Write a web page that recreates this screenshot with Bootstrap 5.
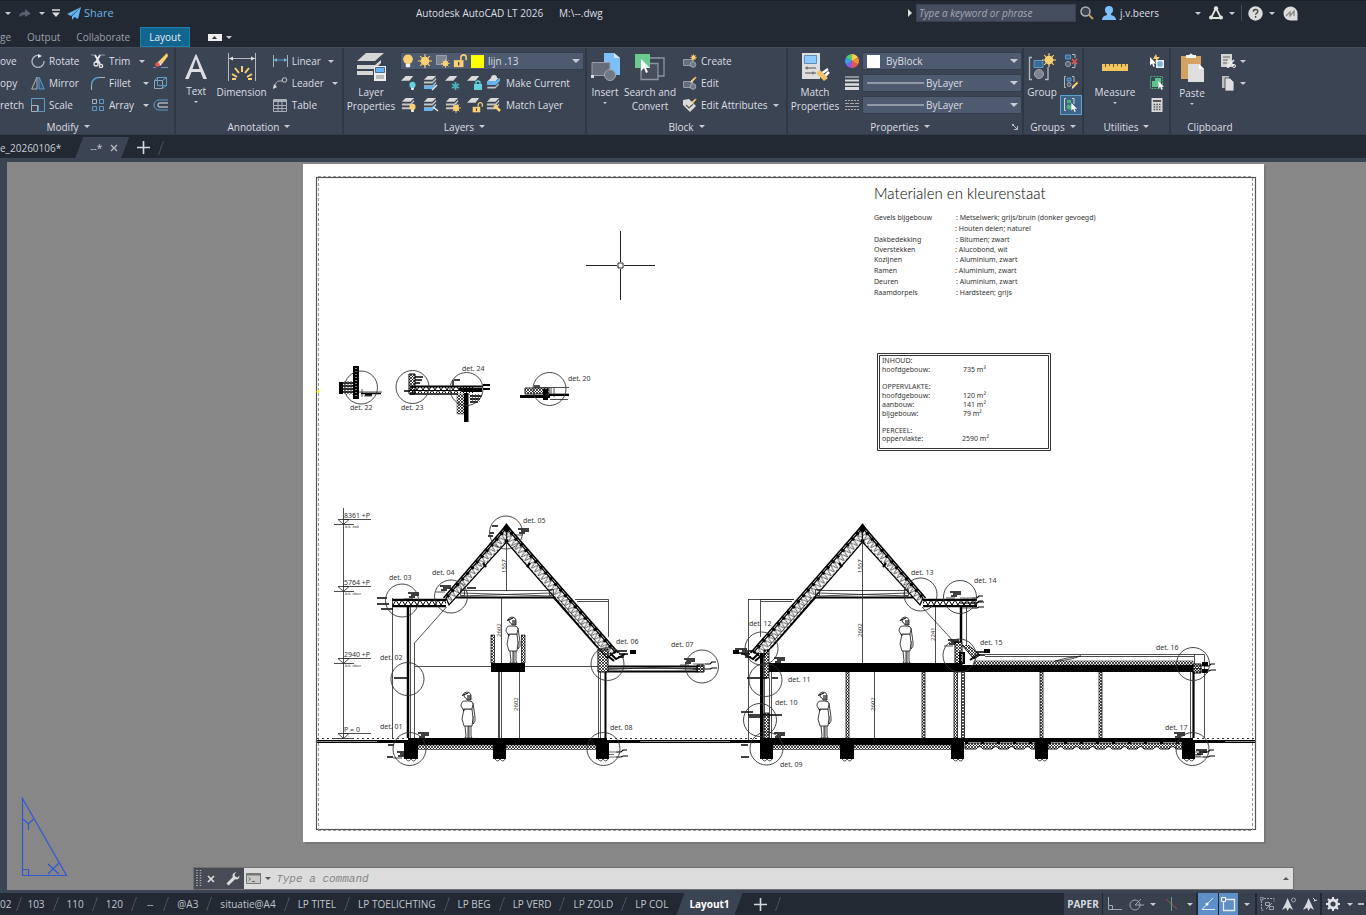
<!DOCTYPE html>
<html lang="en">
<head>
<meta charset="utf-8">
<meta name="viewport" content="width=device-width, initial-scale=1">
<title>Autodesk AutoCAD LT 2026</title>
<link href="https://cdn.jsdelivr.net/npm/bootstrap@5.3.0/dist/css/bootstrap.min.css" rel="stylesheet">
<style>
:root{--ink:#222933;--panel:#3b4453;--field:#4d5a6f;--txt:#dcdfe4}
body{font:10px/14px "Open Sans","Noto Sans",sans-serif;background:var(--ink);color:var(--txt)}
button,input,select{font:inherit;color:inherit}
svg{flex:none;display:block}
.tb{background:none;border:0;padding:0;display:flex;align-items:center;white-space:nowrap;color:var(--txt);text-align:left}
.crt{flex:none;width:0;height:0;border:solid transparent;border-width:3px 3px 0;border-top-color:#c9cdd3}
.crt-lg{border-width:4px 4px 0}
.gap-s{gap:6px}
/* title bar */
.titlebar{height:27px;border-top:1px solid #1b1f28;padding-bottom:2px}
.quick{flex:0 0 416px;gap:7px;padding-left:5px}
.quick .share{color:#6bb3e6;font-size:11px;gap:3px}
.searchbox{width:160px;height:18px;background:#454e5f;border:1px solid #39414f;padding:0 2px;font-style:italic}
.searchbox::placeholder,.cmd input::placeholder{color:#a3a8b1;opacity:1}
.titleright{padding-right:68px}
.user-crt{margin:0 8px 0 36px}
.vr-line{width:1px;height:16px;background:#444d5b;margin:0 6px}
/* ribbon tabs */
.rtabs{height:20px;gap:16px}
.rtabs a{color:#9aa0a9;text-decoration:none;line-height:18px}
.rtabs a.on{background:#11658f;border:1px solid #1c80b3;color:#e8eef4;padding:0 8px;margin:0 2px 0 -6px}
.minimise{width:14px;height:7px;background:#eee;color:#333;justify-content:center}
/* ribbon */
.ribbon{height:88px;background:var(--panel);border-top:1px solid #434c5b;border-bottom:1px solid #333c49}
.panel{flex:none;border-right:2px solid #303846;padding-top:2px}
.panel-body{height:66px}
.panel-name{height:18px;justify-content:center;gap:5px;padding-top:3px}
.rowx{height:22px;display:flex;align-items:center}
.rowx .tb{gap:4px;height:22px}
.sq{width:22px;justify-content:center}
.big{flex-direction:column;text-align:center;padding-top:3px;line-height:14px}
.big svg{margin-bottom:4px}
.big .crt{margin-top:3px;border-width:2px 2px 0}
.w-modify{width:176px}.w-modify .panel-name{padding-right:38px}.w-anno{width:168px}.w-layers{width:243px}.w-block{width:201px}
.w-props{width:236px}.w-groups{width:60px}.w-utils{width:87px}.w-clip{width:78px;border-right:0}
.c-move{width:31px}.c-rot{width:60px}.c-trim{width:62px}.c-icon{width:20px}
.c-big42{width:42px}.c-big50{width:52px}.c-big54{width:54px}.c-big60{width:62px}.c-big36{width:36px}
.c-anno{width:78px;padding-left:6px}.c-block{width:106px;padding-left:6px}
.combo{background:var(--field);border:1px solid #353e4c;height:18px;position:relative;display:flex;align-items:center}
.combo select{appearance:none;background:none;border:0;padding:0 12px 0 0;flex:1;outline:0}
.combo .crt{position:absolute;right:3px;pointer-events:none}
.combo-layer{width:184px;gap:3px;margin-left:2px}.combo-prop{width:160px;padding-left:4px;gap:2px}
.chip{width:13px;height:13px;flex:none}.chip-yellow{background:#ff0;margin:0 1px}
.w-props .sq{width:20px}
.on-sq{background:#3f6486;border:1px solid #5ea2d4;height:20px!important}
/* file tabs */
.ftabs{height:23px;background:var(--ink);padding-top:2px}
.ftabs a{color:#c9cdd3;text-decoration:none}
.ftab-on{width:54px;height:21px;background:var(--panel);clip-path:polygon(8px 0,100% 0,46px 100%,0 100%);gap:8px;padding-left:15px;margin-left:14px}
.strip{height:4px;background:var(--panel)}
.strip-low{height:3px;background:var(--panel)}
/* drawing area */
.stage{background:#878787;border-left:7px solid var(--panel);position:relative;min-height:0}
.dwg{font-family:"Noto Sans","Open Sans",sans-serif;font-size:7px;fill:#333;position:absolute;inset:0}
.dwg .head{font:300 15px Lato,"Open Sans",sans-serif;fill:#000}
.dwg .dim{font-size:6px}.dwg .sub{font-size:4px;font-style:italic}
.k{fill:#000}.n{fill:none;stroke:#222;stroke-width:.8}.n2{fill:none;stroke:#000;stroke-width:2}.ring{fill:none;stroke:#333;stroke-width:.9}
.mk{fill:none;stroke:#000;stroke-width:1.4}
/* command line */
.cmd{position:absolute;left:13.7%;right:5.3%;bottom:0;height:23px;background:#dcdcdc;border:1px solid #6f6f6f;color:#555}
.cmd-grip{flex:none;width:50px;background:#474b56;color:#ddd;gap:5px;padding-left:2px}
.cmd-wrench{margin-left:6px}
.cmd-recent{margin:0 5px 0 2px}.cmd-recent .crt{border-top-color:#555}
.cmd input{background:none;border:0;outline:0;padding:0;font:italic 11px "Liberation Mono",monospace;color:#333}
.cmd input::placeholder{color:#858585}
/* status bar */
.status{height:22px;background:var(--ink)}
.ltabs a{color:#c0c5cc;text-decoration:none;white-space:nowrap;line-height:22px}
.sl{width:22px;flex:none;display:flex;justify-content:center}
.sl:nth-of-type(1){width:16px}
.ltabs .dash{padding:0 2px}
.ltabs a.on{background:var(--panel);color:#fff;font-weight:700;clip-path:polygon(8px 0,100% 0,calc(100% - 8px) 100%,0 100%);padding:0 13px;margin-left:8px}
.plus{margin-left:11px}
.sbtn{background:#38404e;height:22px;justify-content:center;width:22px}
.sbtn.on{background:#5e8fc6;width:20px}
.sbtn.nar{width:12px}.sbtn.mid{width:25px}.sbtn.car{width:17px}.sbtn.tri{width:21px}.sbtn.end{width:10px}
.sgap{margin-right:2px}
.paper{width:38px;font-weight:700;color:#d5d9df;margin-right:1px}
</style>
</head>
<body class="d-flex flex-column vh-100 overflow-hidden">

<svg width="0" height="0" class="position-absolute" aria-hidden="true">
<defs>
<symbol id="i-layers" viewBox="0 0 16 16"><path d="M5 1h9l-4 4H1z" fill="#dadada"/><path d="M1 7h9l4-4v2l-4 4H1zM1 11h9l4-4v2l-4 4H1z" fill="#c4c4c4"/></symbol>
<symbol id="i-layer1" viewBox="0 0 16 16"><path d="M5 1h8l-4 5H0z" fill="#dadada"/></symbol>
<symbol id="i-bulb" viewBox="0 0 16 16"><circle cx="8" cy="6" r="5.500" fill="currentColor"/><path d="M5.500 11h5v3l-1 1h-3l-1-1z" fill="#eee"/></symbol>
<symbol id="i-sun" viewBox="0 0 16 16"><circle cx="8" cy="8" r="5" fill="#fbcf73"/><path d="M8 0v16M0 8h16M2.500 2.500l11 11M13.500 2.500l-11 11" stroke="#fbcf73" stroke-width="1.300"/></symbol>
<symbol id="i-lock" viewBox="0 0 16 16"><path d="M1 7h11v8H1z" fill="currentColor"/><path d="M9 7V4a3 3 0 016 0v3" fill="none" stroke="currentColor" stroke-width="1.800"/><path d="M6.500 9v4" stroke="#3b4453" stroke-width="1.500"/></symbol>
<symbol id="i-pen" viewBox="0 0 16 16"><path d="M13 1l2 2-8 9-3-3z" fill="#fbcf73"/><path d="M4 9l3 3-4 2z" fill="#f3f3f3"/><path d="M12 2l1-1 2 2-1 1z" fill="#e8544f"/></symbol>
<symbol id="i-cursor" viewBox="0 0 10 14"><path d="M0 0v12l3-3 2 5 2-1-2-4h4z" fill="#fff"/></symbol>
<symbol id="i-person" viewBox="0 0 14 14"><path d="M7 0l2.500 5.500L13 13l-4-2.500L7 14l-1.500-3.500L1 13l4-7.500z" fill="#d5d9df"/></symbol>
<symbol id="i-slash" viewBox="0 0 6 14"><path d="M5.500 0L.5 14" stroke="#4a5361"/></symbol>

<pattern id="zig" width="5" height="8" patternUnits="userSpaceOnUse" patternTransform="rotate(48.700)"><path d="M0 0l2.500 8L5 0" fill="none" stroke="#000" stroke-width=".6"/></pattern>
<pattern id="zigL" width="5" height="8" patternUnits="userSpaceOnUse" patternTransform="rotate(-48.700)"><path d="M0 0l2.500 8L5 0" fill="none" stroke="#000" stroke-width=".6"/></pattern>
<pattern id="zigH" width="6" height="5" patternUnits="userSpaceOnUse"><path d="M0 0l3 5 3-5M0 .5h6" fill="none" stroke="#000"/></pattern>
<pattern id="dots" width="3" height="3" patternUnits="userSpaceOnUse"><path d="M0 0l3 3M3 0L0 3" stroke="#000" stroke-width=".7"/></pattern>

<g id="woman" fill="#fff" stroke="#111" stroke-width=".8"><path d="M13 11l2 14q1 5-2 7v-8"/><path d="M5 34l1 10-1 2h3V34M9 34v12h3l-1-2V34"/><path d="M4 17L2 27l2 7h8l1-8-1-9z"/><path d="M5 9q-4 0-4 5l3 5-.500-2H12l1-5q0-3-4-3z"/><path d="M3 3Q4 0 7 0t4 3v5H7L6 6q-2 0-2-3"/><path d="M2 3.500l6-2.500M8 3v5M10 3v5" stroke-width="1.200"/></g>
<g id="mkA" class="mk"><path d="M0 0h11M3 2h8M1 4h6" /><path d="M-4 6h9" stroke-width=".7"/></g>
<g id="mkB" class="mk"><path d="M0 3h5l2-2h4M0 8h5l2-1h5" stroke-width="1.200"/><path d="M-12 3h12M-12 8h12M-12 5.500h10" stroke-width=".6"/></g>
<g id="roof">
<path d="M506.500 528L615 652l-8 6-100.500-116z" fill="#fff"/><path d="M506.500 528L615 652l-8 6-100.500-116z" fill="url(#zig)" stroke="#000" stroke-width="1.200"/>
<path d="M506.500 528L446 598l3 7 57.500-63z" fill="#fff"/><path d="M506.500 528L446 598l3 7 57.500-63z" fill="url(#zigL)" stroke="#000" stroke-width="1.200"/>
<path d="M506.500 525l112 128M506.500 525l-63 73" fill="none" stroke="#000" stroke-width="1.600"/>
<path d="M505.500 527l112 128M507.500 527l-63 73" fill="none" stroke="#000" stroke-width="3.200" stroke-dasharray="2.500 5"/>
<path d="M506.500 523l4 6-4 4-4-4z" class="k"/><circle cx="506.500" cy="541" r="2" class="k"/>
<path d="M461 590.500h90M461 593l90 3M461 596l90-3" class="n"/><path d="M456 597.500h98" class="n2"/>
<path d="M460.500 589.500h4v6h-4zM549.500 589.500h4v6h-4z" class="n"/>
<path d="M483 563l3 4M530 563l-3 4" stroke="#000" stroke-width="2.200"/>
<path d="M553 597l45 51" fill="none" stroke="#000" stroke-width="1.500"/><path d="M557 597l43 49" class="n"/>
<path d="M610 653l6 6 9-5M608 656l6 5" class="n2"/><path d="M617 651h10M619 654h9M618 657h6" class="mk"/><path d="M630 650h6v4h-6z" class="k"/>
<path d="M392 599.500h54M392 606.500h54" stroke="#000" stroke-width="1.500"/><path d="M392 600h54v6h-54z" fill="url(#zigH)"/>
<path d="M575 599.500h33.500V637M577 601.500h31" class="n"/>
</g>
</defs>
</svg>

<header>
<div class="titlebar d-flex align-items-center">
  <div class="quick d-flex align-items-center">
    <button class="tb" aria-label="Undo history"><span class="crt"></span></button>
    <button class="tb" aria-label="Redo"><svg width="14" height="10"><path d="M1 9Q1 4 7 4V1l6 4.500L7 9V7Q3 7 1 9z" fill="#596170"/></svg></button>
    <button class="tb" aria-label="Redo history"><span class="crt"></span></button>
    <button class="tb" aria-label="Customize"><svg width="8" height="8"><path d="M0 1h8" stroke="#ddd" stroke-width="1.500"/><path d="M0 3.500h8L4 8z" fill="#ddd"/></svg></button>
    <button class="tb share"><svg width="14" height="13"><path d="M14 0L0 7l4 2zM14 0L5 9v4l2.500-3 3.500 2z" fill="#63b4ef"/></svg>Share</button>
  </div>
  <div>Autodesk AutoCAD LT 2026</div><div class="ms-3">M:\--.dwg</div>
  <div class="titleright ms-auto d-flex align-items-center">
    <svg width="4" height="8"><path d="M0 0l4 4-4 4z" fill="#ddd"/></svg>
    <input class="searchbox ms-1" type="text" placeholder="Type a keyword or phrase" aria-label="Search help">
    <button class="tb ms-1" aria-label="Search"><svg width="14" height="14"><circle cx="5.500" cy="5.500" r="4.500" fill="#3b4350" stroke="#aeb2b8" stroke-width="1.500"/><path d="M9 9l4 4" stroke="#c59a5c" stroke-width="2"/></svg></button>
    <button class="tb ms-2 gap-1"><svg width="14" height="14"><circle cx="7" cy="4" r="4" fill="#7cc0fa"/><path d="M0 14q0-4 5-5V7h4v2q5 1 5 5z" fill="#7cc0fa"/></svg>j.v.beers</button>
    <span class="crt user-crt"></span>
    <button class="tb gap-s" aria-label="Autodesk App Store"><svg width="14" height="14"><path d="M7 2L2 12h10z" fill="none" stroke="#e2e2e2" stroke-width="1.800"/><circle cx="7" cy="2.500" r="2.200" fill="#e2e2e2"/><circle cx="2" cy="11.500" r="2" fill="#e2e2e2"/><circle cx="12" cy="11.500" r="2" fill="#e2e2e2"/></svg><span class="crt"></span></button>
    <span class="vr-line"></span>
    <button class="tb gap-s" aria-label="Help"><svg width="15" height="15"><circle cx="7.500" cy="7.500" r="7.200" fill="#dcdcdc"/><path d="M5.300 5.800q0-2.300 2.300-2.300t2.200 2q0 1.200-1.300 1.800-.9.500-.9 1.500M7.600 10v1.800" fill="none" stroke="#444" stroke-width="1.400"/></svg><span class="crt"></span></button>
    <button class="tb ms-2" aria-label="Assistant"><svg width="15" height="15"><path d="M7.500.5a7 7 0 017 7v7h-7a7 7 0 010-14z" fill="#dcdcdc"/><path d="M3 10l4-4v4l4-5v5" fill="none" stroke="#888" stroke-width="1.300"/></svg></button>
  </div>
</div>
<nav class="rtabs d-flex align-items-center" aria-label="Ribbon tabs">
  <a href="#">ge</a><a href="#">Output</a><a href="#">Collaborate</a><a href="#" class="on">Layout</a>
  <button class="tb gap-1" aria-label="Minimize ribbon"><span class="minimise d-flex align-items-center"><svg width="5" height="3"><path d="M0 3L2.500 0 5 3z" fill="#333"/></svg></span><span class="crt"></span></button>
</nav>
</header>

<main class="d-flex flex-column flex-fill overflow-hidden">
<div class="ribbon d-flex" role="toolbar" aria-label="Layout ribbon">

  <section class="panel w-modify">
    <div class="panel-body d-flex">
      <div class="c-move"><div class="rowx"><button class="tb">ove</button></div><div class="rowx"><button class="tb">opy</button></div><div class="rowx"><button class="tb">retch</button></div></div>
      <div class="c-rot">
        <div class="rowx"><button class="tb"><svg width="14" height="14"><path d="M8 1.500A6 6 0 1013 7" fill="none" stroke="#aab1bb" stroke-width="1.400"/><path d="M7 0l4 2-4 2z" fill="#eee"/></svg>Rotate</button></div>
        <div class="rowx"><button class="tb"><svg width="14" height="14"><path d="M6 1v12H.7z" fill="none" stroke="#aab1bb"/><path d="M8 1v12h5.300z" fill="#34587a" stroke="#5c9acb"/></svg>Mirror</button></div>
        <div class="rowx"><button class="tb"><svg width="14" height="14"><path d="M.5.5h13v13h-6v-6h-7z" fill="none" stroke="#5c9acb"/><path d="M.5 7.500h6v6h-6z" fill="none" stroke="#aab1bb"/></svg>Scale</button></div>
      </div>
      <div class="c-trim">
        <div class="rowx"><button class="tb"><svg width="14" height="14"><path d="M0 1h4M9 1h5" stroke="#8d96a3"/><path d="M4 1l5 9M9 1L5 8" stroke="#e8e8e8" stroke-width="1.800"/><circle cx="5" cy="10" r="2" fill="none" stroke="#e8e8e8" stroke-width="1.300"/><circle cx="10" cy="12" r="1.600" fill="none" stroke="#e8e8e8" stroke-width="1.300"/></svg>Trim</button><button class="tb ms-auto me-2" aria-label="Trim options"><span class="crt"></span></button></div>
        <div class="rowx"><button class="tb"><svg width="14" height="14"><path d="M.5 14V9" stroke="#aab1bb"/><path d="M.5 9Q1 2 8 1.500" fill="none" stroke="#5c9acb" stroke-width="1.400"/><path d="M8 1.500h6" stroke="#aab1bb"/></svg>Fillet</button><button class="tb ms-auto me-1" aria-label="Fillet options"><span class="crt"></span></button></div>
        <div class="rowx"><button class="tb"><svg width="14" height="14" fill="none"><path d="M1.500 1.500h4v4h-4z" stroke="#aab1bb"/><path d="M8.500 1.500h4v4h-4zM1.500 8.500h4v4h-4zM8.500 8.500h4v4h-4z" stroke="#5c9acb"/></svg>Array</button><button class="tb ms-auto me-1" aria-label="Array options"><span class="crt"></span></button></div>
      </div>
      <div class="c-icon">
        <div class="rowx"><button class="tb" aria-label="Erase"><svg width="16" height="16"><path d="M0 14.500h3M8 14.500h7" stroke="#5c9acb"/><path d="M14 0L6 8l3 3 6-8z" fill="#fbcf73"/><path d="M6 8l3 3-2 2-3-3z" fill="#eee"/><circle cx="4.500" cy="11.500" r="2.200" fill="#e8544f"/></svg></button></div>
        <div class="rowx"><button class="tb" aria-label="Explode"><svg width="15" height="14" fill="none" stroke="#5c9acb"><path d="M1.500 4.500h8v8h-8z" stroke="#8fa6bd"/><path d="M1.500 4.500l3-3h9v8l-4 3M9.500 4.500l4-3M4.500 1.500v8h9"/></svg></button></div>
        <div class="rowx"><button class="tb" aria-label="Offset"><svg width="15" height="12" fill="none"><path d="M15 1H6a5 5 0 000 10h9" stroke="#5c9acb"/><path d="M15 4H7a2 2 0 000 4h8" stroke="#aab1bb" stroke-width="1.300"/></svg></button></div>
      </div>
    </div>
    <button class="tb panel-name w-100">Modify<span class="crt"></span></button>
  </section>

  <section class="panel w-anno">
    <div class="panel-body d-flex">
      <button class="tb big c-big42"><svg width="24" height="27"><path d="M11.500 1.500L1 26h3.700l2.800-7h9l2.800 7H23L12.500 1.500zm.5 4.500l3.500 10h-7z" fill="#dcdee1"/></svg>Text<span class="crt"></span></button>
      <button class="tb big c-big50"><svg width="30" height="28"><path d="M1.500 0v28M28.500 0v28M2 5.500h26" stroke="#b5bac2"/><path d="M2 5.500l4-2v4zM28 5.500l-4-2v4z" fill="#e5e5e5"/><path d="M15 13v6M8 15l4 5M22 15l-4 5M5 21l5 3M25 21l-5 3M5 26h4M21 26h4" stroke="#fbcf73" stroke-width="2"/></svg>Dimension</button>
      <div class="c-anno">
        <div class="rowx"><button class="tb"><svg width="15" height="12"><path d="M.5 0v12M14.500 0v12" stroke="#aab1bb"/><path d="M1 5h13" stroke="#5c9acb"/><path d="M1 5l3-2v4zM14 5l-3-2v4z" fill="#6bb3e6"/></svg>Linear</button><button class="tb ms-auto me-2" aria-label="Linear options"><span class="crt"></span></button></div>
        <div class="rowx"><button class="tb"><svg width="15" height="12"><path d="M1 11Q3 4 6 4h3" fill="none" stroke="#aab1bb"/><path d="M0 12l1-5 3 3z" fill="#ddd"/><circle cx="11.500" cy="3" r="2.300" fill="none" stroke="#c5cad1"/></svg>Leader</button><button class="tb ms-auto me-1" aria-label="Leader options"><span class="crt"></span></button></div>
        <div class="rowx"><button class="tb"><svg width="15" height="13"><path d="M.5.500h13v12H.5zM.5 6.500h13M.5 9.500h13M5 3v9M9 3v9" fill="none" stroke="#aab1bb"/><path d="M1 2h12" stroke="#aab1bb" stroke-width="2"/></svg>Table</button></div>
      </div>
    </div>
    <button class="tb panel-name w-100">Annotation<span class="crt"></span></button>
  </section>

  <section class="panel w-layers">
    <div class="panel-body d-flex">
      <button class="tb big c-big54"><svg width="29" height="28"><path d="M9 0h18l-9 8H0zM0 12h18l6-5v3l-6 6H0zM0 18h16v4H0z" fill="#d6d6d6"/><path d="M17 13h12v15H17z" fill="#eee"/><path d="M18.500 14.500h9v5h-9z" fill="#68b4f2" stroke="#41719a"/><path d="M19 23h8M19 25h8" stroke="#888"/></svg>Layer<br>Properties</button>
      <div>
        <div class="rowx"><div class="combo combo-layer">
          <svg width="14" height="14" color="#fbcf73"><use href="#i-bulb"/></svg><svg width="14" height="14"><use href="#i-sun"/></svg>
          <svg width="15" height="14"><path d="M1.500 1.500h10v9h-10z" fill="#7c8492" stroke="#9aa1ac"/><use href="#i-sun" x="6" y="5" width="9" height="9"/></svg>
          <svg width="14" height="14" color="#fbcf73"><use href="#i-lock"/></svg><span class="chip chip-yellow"></span>
          <select aria-label="Layer"><option>lijn .13</option></select><span class="crt crt-lg"></span></div></div>
        <div class="rowx">
          <button class="tb sq" aria-label="Off"><svg width="16" height="16"><use href="#i-layer1" width="15" height="15"/><use href="#i-bulb" x="7" y="6" width="9" height="10" color="#62d3dc"/></svg></button>
          <button class="tb sq" aria-label="Isolate"><svg width="16" height="16"><use href="#i-layers" width="15" height="15"/><path d="M1 11h8l3-3v3l-3 3H1z" fill="#63b4ef"/><path d="M9 15l5-5" stroke="#eee" stroke-width="1.500"/></svg></button>
          <button class="tb sq" aria-label="Freeze"><svg width="16" height="16"><use href="#i-layer1" width="15" height="15"/><path d="M10.500 7v8M7 9l7 4M14 9l-7 4" stroke="#48b5bd" stroke-width="1.800"/></svg></button>
          <button class="tb sq" aria-label="Lock"><svg width="16" height="16"><use href="#i-layer1" width="15" height="15"/><path d="M7 9h8v6H7z" fill="#62d3dc"/><path d="M9 9V7q2-2 4 0v2" fill="none" stroke="#62d3dc" stroke-width="1.400"/></svg></button>
          <button class="tb"><svg width="16" height="16"><use href="#i-layers" y="2" width="15" height="14"/><path d="M1 6h9l4-3v3l-4 4H1z" fill="#63b4ef"/><circle cx="8" cy="3" r="3" fill="#ddd"/></svg>Make Current</button>
        </div>
        <div class="rowx">
          <button class="tb sq" aria-label="Turn all on"><svg width="16" height="16"><use href="#i-layers" width="15" height="15"/><use href="#i-bulb" x="7" y="6" width="9" height="10" color="#fbcf73"/></svg></button>
          <button class="tb sq" aria-label="Unisolate"><svg width="16" height="16"><use href="#i-layers" width="15" height="15"/><path d="M1 11h8l3-3v3l-3 3H1z" fill="#63b4ef"/><path d="M15 14l-5-4" stroke="#eee" stroke-width="1.500"/></svg></button>
          <button class="tb sq" aria-label="Thaw all"><svg width="16" height="16"><use href="#i-layers" width="15" height="15"/><use href="#i-sun" x="6" y="6" width="10" height="10"/></svg></button>
          <button class="tb sq" aria-label="Unlock"><svg width="16" height="16"><use href="#i-layer1" width="15" height="15"/><use href="#i-lock" x="5" y="5" width="11" height="11" color="#fbcf73"/></svg></button>
          <button class="tb"><svg width="16" height="16"><use href="#i-layers" width="15" height="15"/><path d="M9 9l5 5M11 8l-3 3" stroke="#fbcf73" stroke-width="2.500"/></svg>Match Layer</button>
        </div>
      </div>
    </div>
    <button class="tb panel-name w-100">Layers<span class="crt"></span></button>
  </section>

  <section class="panel w-block">
    <div class="panel-body d-flex">
      <button class="tb big c-big36"><svg width="29" height="28"><path d="M13 0h10l6 5v17H13z" fill="#7dc0fb"/><path d="M23 0v5h6z" fill="#cfe6fb"/><path d="M1 9.500h18v13H1z" fill="#666e7b" stroke="#969da8"/><circle cx="19" cy="22" r="5.500" fill="#707886" stroke="#a3a9b3"/><path d="M0 22h3v3H0z" fill="#ddd"/></svg>Insert<span class="crt"></span></button>
      <button class="tb big c-big54"><svg width="30" height="28"><path d="M10 5h19v18H10z" fill="none" stroke="#8d96a3" stroke-width="1.300"/><path d="M6 10.500h17v16H6z" fill="#474f5d" stroke="#8d96a3" stroke-width="1.300"/><path d="M0 1h15v14H0z" fill="#6cc98f"/><use href="#i-cursor" x="6" y="6" width="10" height="14"/></svg>Search and<br>Convert</button>
      <div class="c-block">
        <div class="rowx"><button class="tb"><svg width="14" height="14"><path d="M.5 5.500h9v6h-9z" fill="#666e7b" stroke="#969da8"/><circle cx="10" cy="10.500" r="2.800" fill="#707886" stroke="#a3a9b3"/><use href="#i-sun" x="7" y="0" width="7" height="7"/></svg>Create</button></div>
        <div class="rowx"><button class="tb"><svg width="14" height="14"><path d="M.5 5.500h9v6h-9z" fill="#666e7b" stroke="#969da8"/><circle cx="10" cy="10.500" r="2.800" fill="#707886" stroke="#a3a9b3"/><use href="#i-pen" x="6" y="0" width="8" height="8"/></svg>Edit</button></div>
        <div class="rowx"><button class="tb"><svg width="14" height="14"><path d="M0 2l6-1 7 7-6 6-7-7z" fill="#d9d9d9"/><path d="M3 7l3 3 4-4" fill="none" stroke="#555" stroke-width="1.200"/><use href="#i-pen" x="6" y="0" width="8" height="8"/></svg>Edit Attributes</button><button class="tb ms-auto me-1" aria-label="Edit attribute options"><span class="crt"></span></button></div>
      </div>
    </div>
    <button class="tb panel-name w-100">Block<span class="crt"></span></button>
  </section>

  <section class="panel w-props">
    <div class="panel-body d-flex">
      <button class="tb big c-big54"><svg width="29" height="28"><path d="M1 0h18v26H1z" fill="#dedede"/><path d="M3.500 2.500h12v8h-12z" fill="#8ccbff" stroke="#5c8fb8"/><path d="M4 15h11M4 20h11" stroke="#555"/><path d="M6 13.500v3M12 18.500v3" stroke="#555"/><path d="M20 21l7-5M23 24l5-5" stroke="#fff" stroke-width="2.500"/><path d="M15 20l4-3 8 8-4 3z" fill="#f0c466"/></svg>Match<br>Properties</button>
      <div>
        <div class="rowx"><button class="tb sq" aria-label="Object colour"><svg width="16" height="16"><path d="M8 8V1a7 7 0 016 3.500z" fill="#fbcf4a"/><path d="M8 8l6-3.500a7 7 0 010 7z" fill="#f58b3c"/><path d="M8 8l6 3.500A7 7 0 018 15z" fill="#e8544f"/><path d="M8 8v7a7 7 0 01-6-3.500z" fill="#8d5ae8"/><path d="M8 8l-6 3.500a7 7 0 010-7z" fill="#3f9df2"/><path d="M8 8L2 4.500A7 7 0 018 1z" fill="#58c971"/></svg></button>
          <div class="combo combo-prop"><span class="chip bg-white me-1"></span><select aria-label="Object colour"><option>ByBlock</option></select><span class="crt crt-lg"></span></div></div>
        <div class="rowx"><button class="tb sq" aria-label="Lineweight"><svg width="14" height="14"><path d="M0 1h14" stroke="#ddd"/><path d="M0 4.500h14" stroke="#ddd" stroke-width="2"/><path d="M0 8.500h14" stroke="#ddd" stroke-width="2.500"/><path d="M0 12.500h14" stroke="#ddd" stroke-width="3"/></svg></button>
          <div class="combo combo-prop"><svg width="57" height="2"><path d="M0 1h57" stroke="#d5d8dd"/></svg><select aria-label="Lineweight"><option>ByLayer</option></select><span class="crt crt-lg"></span></div></div>
        <div class="rowx"><button class="tb sq" aria-label="Linetype"><svg width="14" height="12"><path d="M0 1.500h14" stroke="#aaa" stroke-dasharray="2 1"/><path d="M0 4.500h14" stroke="#aaa" stroke-dasharray="4 1"/><path d="M0 7.500h14" stroke="#aaa"/><path d="M0 10.500h14" stroke="#aaa" stroke-dasharray="2 1"/></svg></button>
          <div class="combo combo-prop"><svg width="57" height="2"><path d="M0 1h57" stroke="#d5d8dd"/></svg><select aria-label="Linetype"><option>ByLayer</option></select><span class="crt crt-lg"></span></div></div>
      </div>
    </div>
    <div class="d-flex"><button class="tb panel-name flex-fill">Properties<span class="crt"></span></button><button class="tb me-1 pt-1" aria-label="Properties palette"><svg width="6" height="6"><path d="M0 .5h2M.5 0v2M1 1l4 4M5.500 2v3.500H2" fill="none" stroke="#b8bdc5"/></svg></button></div>
  </section>

  <section class="panel w-groups">
    <div class="panel-body d-flex">
      <button class="tb big c-big36"><svg width="28" height="28"><path d="M4 4.500H1.500v22H4M17 26.500h3V14" fill="none" stroke="#b5bac2" stroke-width="1.300"/><path d="M6 7.500h9v7H6z" fill="#3b6a94" stroke="#5c9acb"/><circle cx="11" cy="21" r="4.500" fill="#7e8591" stroke="#a3a9b3"/><use href="#i-sun" x="14" y="0" width="14" height="14"/></svg>Group</button>
      <div>
        <div class="rowx"><button class="tb sq" aria-label="Ungroup"><svg width="14" height="14"><path d="M1.500 1h5v4h-5z" fill="#3b6a94" stroke="#5c9acb"/><circle cx="4" cy="10" r="2.500" fill="#59616f" stroke="#a3a9b3"/><path d="M8 .5h3V4M11 9v4.500H8" fill="none" stroke="#b5bac2"/><path d="M8 5l5 5M13 5l-5 5" stroke="#e8544f" stroke-width="1.600"/></svg></button></div>
        <div class="rowx"><button class="tb sq" aria-label="Group edit"><svg width="14" height="14"><path d="M2 .5H.5v11H2M8 .5h2V6" fill="none" stroke="#b5bac2"/><path d="M3 2h4v3H3z" fill="#3b6a94" stroke="#5c9acb"/><circle cx="5" cy="8.500" r="2" fill="#59616f" stroke="#a3a9b3"/><use href="#i-pen" x="6" y="5" width="9" height="9"/></svg></button></div>
        <div class="rowx"><button class="tb sq on-sq" aria-label="Group selection on" aria-pressed="true"><svg width="14" height="14"><path d="M2 .5H.5v12H2M8 .5h2V6" fill="none" stroke="#d0d4da"/><path d="M3 2h4v3H3z" fill="#4db07a"/><circle cx="5" cy="9" r="2.500" fill="#4db07a"/><use href="#i-cursor" x="7" y="5" width="7" height="9"/></svg></button></div>
      </div>
    </div>
    <button class="tb panel-name w-100">Groups<span class="crt"></span></button>
  </section>

  <section class="panel w-utils">
    <div class="panel-body d-flex">
      <button class="tb big c-big60"><svg width="26" height="28"><path d="M0 11h26v7H0z" fill="#f3c55f"/><path d="M3.500 11v3M7.500 11v2M11.500 11v3M15.500 11v2M19.500 11v3M23.500 11v2" stroke="#6b5a2b"/></svg>Measure<span class="crt"></span></button>
      <div>
        <div class="rowx"><button class="tb sq" aria-label="Quick select"><svg width="15" height="15"><path d="M6 6h8v8H6z" fill="#e6eef6"/><path d="M8 8h4v4H8zM10 8v4M8 10h4" fill="none" stroke="#5c9acb"/><path d="M6 0L3 5h3L5 8l5-5H7z" fill="#fbcf73"/><use href="#i-cursor" x="0" y="3" width="7" height="10"/></svg></button></div>
        <div class="rowx"><button class="tb sq" aria-label="Select all"><svg width="14" height="14"><path d="M.5.500h12v12H.5z" fill="none" stroke="#4db07a" stroke-dasharray="2 1"/><path d="M2 5h6v6H2zM5 2h6v6H5z" fill="#5cc48a"/><use href="#i-cursor" x="8" y="5" width="7" height="9"/></svg></button></div>
        <div class="rowx"><button class="tb sq" aria-label="Quick calculator"><svg width="12" height="14"><path d="M.5 0h11v14H.5z" fill="#d9d9d9"/><path d="M2 2h8v2H2z" fill="#555"/><path d="M2.500 6.500h7M2.500 9h7M2.500 11.500h7" stroke="#555" stroke-width="1.500" stroke-dasharray="1.700 1"/></svg></button></div>
      </div>
    </div>
    <button class="tb panel-name w-100">Utilities<span class="crt"></span></button>
  </section>

  <section class="panel w-clip">
    <div class="panel-body d-flex">
      <button class="tb big c-big42"><svg width="24" height="29"><path d="M1 3h20v23H1z" fill="#d2a262"/><path d="M6 5V2h3q2-3 4 0h3v3z" fill="#f2f2f2"/><path d="M8 11h11l5 5v13H8z" fill="#dedede"/><path d="M19 11v5h5z" fill="#fff"/></svg>Paste<span class="crt"></span></button>
      <div class="ps-2">
        <div class="rowx"><button class="tb" aria-label="Cut"><svg width="15" height="14"><path d="M0 0h11v13H0z" fill="#d5d5d5"/><path d="M2 3h7M2 6h5M2 9h4" stroke="#666"/><path d="M7 6l6 6M13 6l-6 6" stroke="#f0f0f0" stroke-width="1.500"/><circle cx="7" cy="12" r="1.500" fill="none" stroke="#eee"/><circle cx="13" cy="12" r="1.500" fill="none" stroke="#eee"/></svg><span class="crt"></span></button></div>
        <div class="rowx"><button class="tb" aria-label="Copy clip"><svg width="15" height="15"><path d="M1 0h7v12H1z" fill="#bdbdbd"/><path d="M4 2h5l4 4v9H4z" fill="#dedede" stroke="#3b4453" stroke-width=".8"/></svg><span class="crt"></span></button></div>
      </div>
    </div>
    <div class="panel-name d-flex align-items-center">Clipboard</div>
  </section>
</div>

<nav class="ftabs d-flex align-items-center" aria-label="Open drawings">
  <a href="#">e_20260106*</a>
  <div class="ftab-on d-flex align-items-center"><a href="#">--*</a><button class="tb" aria-label="Close drawing"><svg width="8" height="8"><path d="M1 1l6 6M7 1L1 7" stroke="#b4b8bf" stroke-width="1.400"/></svg></button></div>
  <button class="tb ms-2" aria-label="New drawing"><svg width="13" height="13"><path d="M6.500 0v13M0 6.500h13" stroke="#d5d8dd" stroke-width="1.600"/></svg></button>
  <svg width="6" height="14" class="ms-2"><use href="#i-slash"/></svg>
</nav>
<div class="strip"></div>

<div class="stage flex-fill">
<svg class="dwg w-100 h-100" viewBox="7 162 1359 728" role="img" aria-label="Section drawing on paper layout">
<rect x="305" y="166" width="961" height="678" fill="#777"/>
<rect x="303" y="164" width="961" height="678" fill="#fff"/>
<rect x="316.500" y="177.500" width="939" height="652" fill="none" stroke="#555" stroke-width="1.200"/>
<path d="M318 176.500h935M318 830.500h935M318.500 178v652M1252.500 178v652" fill="none" stroke="#999" stroke-dasharray="3 2"/>
<circle cx="318" cy="391.500" r="1.500" fill="#ff0"/>
<path d="M586 265.500h31M624 265.500h31M620.500 231v31M620.500 269v31M618 263h5v5h-5z" fill="none" stroke="#222"/>

<text class="head" x="874" y="199">Materialen en kleurenstaat</text>
<g>
<text x="874" y="220">Gevels bijgebouw</text><text x="956" y="220">: Metselwerk; grijs/bruin (donker gevoegd)</text>
<text x="955" y="231">: Houten delen; naturel</text>
<text x="874" y="242">Dakbedekking</text><text x="956" y="242">: Bitumen; zwart</text>
<text x="874" y="252">Overstekken</text><text x="955" y="252">: Alucobond, wit</text>
<text x="874" y="262">Kozijnen</text><text x="956" y="262">: Aluminium, zwart</text>
<text x="874" y="273">Ramen</text><text x="955" y="273">: Aluminium, zwart</text>
<text x="874" y="284">Deuren</text><text x="956" y="284">: Aluminium, zwart</text>
<text x="874" y="295">Raamdorpels</text><text x="956" y="295">: Hardsteen; grijs</text>
</g>
<path d="M877.500 353.500h173v97h-173zM879.500 355.500h169v93h-169z" fill="none" stroke="#333"/>
<g>
<text x="882" y="363">INHOUD:</text><text x="882" y="372">hoofdgebouw:</text><text x="963" y="372">735 m³</text>
<text x="882" y="389">OPPERVLAKTE:</text><text x="882" y="398">hoofdgebouw:</text><text x="963" y="398">120 m²</text>
<text x="882" y="407">aanbouw:</text><text x="963" y="407">141 m²</text><text x="882" y="416">bijgebouw:</text><text x="963" y="416">79 m²</text>
<text x="882" y="433">PERCEEL:</text><text x="882" y="441">oppervlakte:</text><text x="962" y="441">2590 m²</text>
</g>

<!-- loose details 20, 22, 23, 24 -->
<path d="M353 366h6v33h-6z" class="k"/><path d="M356 368v29" stroke="#fff" stroke-dasharray="1 2"/><path d="M339 383h14M339 386h14M339 389h14M339 392h14" class="mk"/><path d="M339 382h4v12h-4z" class="k"/><path d="M344 381h9v14h-9z" fill="url(#dots)" opacity=".5"/>
<path d="M359 392h23M362 389v8M364 396h8" class="n"/><path d="M361 393.500h20M365 395h7" class="mk"/>
<path d="M409 374h6v20h-6z" fill="url(#dots)" stroke="#000"/><path d="M415 377h8M415 380h7M415 383h5M404 391h6" class="mk"/>
<path d="M410 386.500h73" class="n2"/><path d="M410 387h65v6h-65z" fill="url(#zigH)"/><path d="M410 394h48" stroke="#000" stroke-width="1.500"/>
<path d="M457 394h7v20h-7z" fill="url(#dots)" stroke="#222" stroke-width=".5"/><path d="M458 388h24v4h-20z" class="k"/><path d="M464 393h4.500v29H464z" class="k"/>
<path d="M470 396h12M470 399h10M470 402h8M453 380v6M454 380h6" class="mk"/><path d="M483 385h7M483 389h7" class="n2"/>
<path d="M469 394h11v8h-10z" fill="url(#dots)" opacity=".6"/>
<path d="M525 388h24v6h-24z" fill="url(#dots)" stroke="#222"/><path d="M520 395h30v3h-30z" class="k"/><path d="M543 389h5v11h-5z" class="k"/><path d="M534 386h6" class="mk"/>
<path d="M534 387.500h35M551 388v8M554 388v9M550 399.500h18M545 394h24" class="n"/><path d="M549 395h20" class="n2"/>

<!-- height marks -->
<path d="M343.500 508v230M344 519.500h27M344 586.500h27M344 658.500h27M344 733.500h27M334 524.500h20M334 591.500h20M334 663.500h20M334 738.500h20M338 519.500h11l-5.500 5zM338 586.500h11l-5.500 5zM338 658.500h11l-5.500 5zM338 733.500h11l-5.500 5z" class="n"/>
<text x="344" y="518">8361 +P</text><text x="344" y="585">5764 +P</text><text x="344" y="657">2940 +P</text><text x="344" y="732">P = 0</text>
<text class="sub" x="345" y="528">b.k. nok</text><text class="sub" x="345" y="595">b.k. vloer</text><text class="sub" x="345" y="667">b.k. vloer</text>

<!-- ground -->
<path d="M317 741.500h92M606 741.500h156M1194 741.500h61" stroke="#000" stroke-width="3"/><path d="M317 741.500h60M640 741.500h90M1225 741.500h30" stroke="#888"/>
<path d="M317 738.500h87M610 738.500h150M1197 738.500h57" stroke="#333" stroke-dasharray="2 3"/>

<!-- section one -->
<use href="#roof"/>
<path d="M408 738h199v7H408zM404 740h14v19h-14zM493 740h13v19h-13zM596 740h13v19h-13z" class="k"/>
<path d="M418 745h75v4.500h-75zM506 745h90v4.500h-90z" fill="url(#dots)" stroke="#222" stroke-width=".6"/>
<path d="M406 759q3 4 5 0q3 4 5 0M495 759q3 4 5 0q3 4 5 0M598 759q3 4 5 0q3 4 5 0" class="n"/>
<path d="M408 606v132" stroke="#000" stroke-width="2.500"/><path d="M392.500 598v141M414.500 738v-95l32-36M410.500 606v132" class="n"/>
<path d="M415 666.500h183M506.500 532v59M501.500 597v66M498.500 672v66M501.500 672v66M499.500 672v66M519.500 672v66" class="n"/>
<path d="M491 663h34v9h-34z" class="k"/><path d="M491 635h3.500v28H491zM521.500 635h3.500v28h-3.500z" fill="url(#dots)" stroke="#000" stroke-width=".7"/>
<path d="M598 649h10v23h-10z" fill="url(#dots)" stroke="#000"/><path d="M598.500 672v66M600.500 672v66" class="n"/><path d="M605.500 672v66" stroke="#000" stroke-width="2"/>
<path d="M608 666.500h90M608 671.500h90" stroke="#000" stroke-width="1.800"/><path d="M608 668.500h90M608 669.500l45-2 45 2" class="n"/><path d="M697 665h7v7h-7z" fill="url(#dots)" stroke="#000"/>
<use href="#woman" x="505" y="617"/><use href="#woman" x="460" y="692"/>
<g class="dim"><text transform="translate(506 573) rotate(-90)">1557</text><text transform="translate(501 637) rotate(-90)">2602</text><text transform="translate(518 711) rotate(-90)">2602</text></g>

<!-- section two -->
<use href="#roof" transform="translate(1369 0) scale(-1 1)"/>
<path d="M748.500 599v141M748 599.500h46" class="n"/>
<path d="M760 653h3.500v86H760z" class="k"/><path d="M764 650h5v28h-5zM764 713h5v26h-5z" fill="url(#dots)" stroke="#000" stroke-width=".8"/><path d="M764.500 678v35M769.500 678v60M771.500 672v66" class="n"/>
<path d="M769 663h192v9H769zM961 665h232v7H961z" class="k"/><path d="M974 661h219v4H974z" fill="url(#dots)" stroke="#222" stroke-width=".6"/>
<path d="M770 738h194v7H770zM960 738h233v4H960zM760 738h13v21h-13zM840 740h14v19h-14zM951 740h13v19h-13zM1035 740h13v19h-13zM1182 740h13v19h-13z" class="k"/>
<path d="M773 745h67v4.500h-67zM854 745h97v4.500h-97z" fill="url(#dots)" stroke="#222" stroke-width=".6"/>
<path d="M965 743h70v6h-4q-3-5-7 0h-9q-3-5-7 0h-9q-3-5-7 0h-9q-3-5-7 0h-11zM1048 743h134v6h-6q-3-5-7 0h-9q-3-5-7 0h-9q-3-5-7 0h-9q-3-5-7 0h-9q-3-5-7 0h-9q-3-5-7 0h-9q-3-5-7 0h-9q-3-5-7 0h-9z" fill="url(#dots)" stroke="#111"/>
<path d="M965 742.500h70M1048 742.500h134" stroke="#000" stroke-width="3" stroke-dasharray="3 13"/>
<path d="M762 759q3 4 5 0q3 4 5 0M842 759q3 4 5 0q3 4 5 0M953 759q3 4 5 0q3 4 5 0M1037 759q3 4 5 0q3 4 5 0M1184 759q3 4 5 0q3 4 5 0" class="n"/>
<path d="M846 672h3v66h-3zM922 672h3v66h-3zM954 672h3.500v66H954zM961.500 672h3v66h-3zM1040 672h3v66h-3zM1099 672h3v66h-3z" fill="url(#dots)" stroke="#111" stroke-width=".8"/>
<path d="M862.500 532v131M874.500 672v66M935.500 607v56M922 607l33 36M966.500 606v40" class="n"/>
<path d="M961 606v36" stroke="#000" stroke-width="2.500"/><path d="M955 642h7v23h-7z" fill="url(#dots)" stroke="#000"/><path d="M962 645l12 14 6-4-12-10" fill="url(#dots)" stroke="#000"/><path d="M970 660l7-5M960 653h4v10h-4z" class="n2"/><path d="M976 652h10M977 655h8" class="mk"/><path d="M984 649h6v4h-6z" class="k"/>
<path d="M985 654.500h219.500V738M985 656.500h209M1194.500 654v10" class="n"/><path d="M1055 661l12-3 14-2-10 3-12 2z" class="n"/>
<path d="M1190.500 672v66" class="n"/><path d="M1193.500 672v66" stroke="#000" stroke-width="2.200"/><path d="M1193 664h8v9h-8z" fill="url(#dots)" stroke="#000"/><path d="M1202 662h6v4h-6zM1202 669h6v4h-6z" class="k"/>
<use href="#woman" x="898" y="617"/><use href="#woman" x="816" y="692"/>
<g class="dim"><text transform="translate(862 573) rotate(-90)">1557</text><text transform="translate(862 637) rotate(-90)">2602</text><text transform="translate(875 711) rotate(-90)">2602</text><text transform="translate(935 641) rotate(-90)">2241</text></g>

<!-- leader notes -->
<use href="#mkA" x="518" y="529"/><use href="#mkA" x="408" y="593"/><use href="#mkA" x="440" y="586"/><use href="#mkA" x="418" y="733"/><use href="#mkA" x="684" y="659"/><use href="#mkA" x="774" y="658"/><use href="#mkA" x="774" y="733"/><use href="#mkA" x="950" y="592"/><use href="#mkA" x="1174" y="733"/><use href="#mkA" x="948" y="640"/><use href="#mkA" x="1196" y="750"/><use href="#mkA" x="397" y="752"/>
<path d="M492 526h6M490 533h4M488 536h5M467 588h9M377 598h10M377 604h12M381 609h12M394 678h13M747 678h20M772 678h6M741 712h12M748 715h34M749 717h14M741 745h7M741 757h8M388 745h6M387 757h6M735 649h12M733 653h16" class="mk"/>
<use href="#mkB" x="705" y="661"/><use href="#mkB" x="616" y="749"/><use href="#mkB" x="972" y="595"/><use href="#mkB" x="972" y="600"/><use href="#mkB" x="1204" y="663"/><use href="#mkB" x="1203" y="749"/>

<g class="ring"><circle cx="361" cy="387.500" r="16.500"/><circle cx="412.500" cy="387" r="16.500"/><circle cx="466.500" cy="389" r="16.500"/><circle cx="549.500" cy="389" r="16.500"/>
<circle cx="506" cy="532.500" r="16.500"/><circle cx="402" cy="600.500" r="16.500"/><circle cx="451" cy="596.500" r="16.500"/><circle cx="407.500" cy="679" r="16.500"/><circle cx="409.500" cy="749" r="16.500"/><circle cx="607.500" cy="664" r="16.500"/><circle cx="702" cy="666.500" r="16.500"/><circle cx="603.500" cy="749" r="16.500"/>
<circle cx="920.500" cy="594.500" r="16.500"/><circle cx="960" cy="597" r="16.500"/><circle cx="761.500" cy="648.500" r="16.500"/><circle cx="765.500" cy="680" r="16.500"/><circle cx="760" cy="720" r="16.500"/><circle cx="766.500" cy="748.500" r="16.500"/><circle cx="959.500" cy="655.500" r="16.500"/><circle cx="1193" cy="664" r="16.500"/><circle cx="1192.500" cy="749" r="16.500"/></g>
<g>
<text x="350" y="410">det. 22</text><text x="401" y="410">det. 23</text><text x="462" y="371">det. 24</text><text x="568" y="381">det. 20</text>
<text x="523" y="523">det. 05</text><text x="389" y="580">det. 03</text><text x="432" y="575">det. 04</text><text x="380" y="660">det. 02</text><text x="380" y="729">det. 01</text><text x="616" y="644">det. 06</text><text x="671" y="647">det. 07</text><text x="610" y="730">det. 08</text>
<text x="749" y="626">det. 12</text><text x="911" y="575">det. 13</text><text x="974" y="583">det. 14</text><text x="980" y="645">det. 15</text><text x="788" y="682">det. 11</text><text x="775" y="705">det. 10</text><text x="780" y="767">det. 09</text><text x="1156" y="650">det. 16</text><text x="1165" y="730">det. 17</text>
</g>

<!-- UCS icon -->
<g fill="none" stroke="#3358d0" stroke-width="1.200"><path d="M22.500 798.500v77h44zM22.500 869.500h6v6M23 819l5.500 5 5-5M28.500 824v6M48 864l11 10M59 863l-11 11"/></g>
</svg>

<div class="cmd d-flex align-items-stretch">
  <div class="cmd-grip d-flex align-items-center">
    <svg width="6" height="17"><path d="M1 0v17M4.500 0v17" stroke="#bbb" stroke-width="1.500" stroke-dasharray="1 1.500"/></svg>
    <button class="tb" aria-label="Close command line"><svg width="8" height="8"><path d="M1 1l6 6M7 1L1 7" stroke="#ddd" stroke-width="1.700"/></svg></button>
    <button class="tb cmd-wrench" aria-label="Customize"><svg width="14" height="14"><path d="M13.500 3.500l-2 2-2.500-1L8.500 2l2-1.500Q7 0 6.500 3.500l.3 1.500L.5 11.500 2.500 13.500 9 7.300q4.500.7 4.500-3.800z" fill="#ddd"/></svg></button>
  </div>
  <button class="tb cmd-recent gap-1" aria-label="Recent commands"><svg width="15" height="11"><path d="M.5.500h14v10H.5z" fill="#c9c9c9" stroke="#777"/><path d="M0 1.500h15" stroke="#777" stroke-width="2"/><path d="M2.500 4.500l2 1.500-2 1.500M6 8.500h3" fill="none" stroke="#666"/></svg><span class="crt"></span></button>
  <input class="flex-fill" type="text" placeholder="Type a command" aria-label="Command">
  <button class="tb me-1" aria-label="Command history"><svg width="6" height="3"><path d="M0 3l3-3 3 3z" fill="#555"/></svg></button>
</div>
</div>
<div class="strip-low"></div>
</main>

<footer class="status d-flex align-items-center">
  <nav class="ltabs d-flex align-items-center" aria-label="Layouts">
    <a href="#">02</a><span class="sl"><svg width="6" height="14"><use href="#i-slash"/></svg></span>
    <a href="#">103</a><span class="sl"><svg width="6" height="14"><use href="#i-slash"/></svg></span>
    <a href="#">110</a><span class="sl"><svg width="6" height="14"><use href="#i-slash"/></svg></span>
    <a href="#">120</a><span class="sl"><svg width="6" height="14"><use href="#i-slash"/></svg></span>
    <a href="#" class="dash">--</a><span class="sl"><svg width="6" height="14"><use href="#i-slash"/></svg></span>
    <a href="#">@A3</a><span class="sl"><svg width="6" height="14"><use href="#i-slash"/></svg></span>
    <a href="#">situatie@A4</a><span class="sl"><svg width="6" height="14"><use href="#i-slash"/></svg></span>
    <a href="#">LP TITEL</a><span class="sl"><svg width="6" height="14"><use href="#i-slash"/></svg></span>
    <a href="#">LP TOELICHTING</a><span class="sl"><svg width="6" height="14"><use href="#i-slash"/></svg></span>
    <a href="#">LP BEG</a><span class="sl"><svg width="6" height="14"><use href="#i-slash"/></svg></span>
    <a href="#">LP VERD</a><span class="sl"><svg width="6" height="14"><use href="#i-slash"/></svg></span>
    <a href="#">LP ZOLD</a><span class="sl"><svg width="6" height="14"><use href="#i-slash"/></svg></span>
    <a href="#">LP COL</a>
    <a href="#" class="on" aria-current="page">Layout1</a>
    <button class="tb plus" aria-label="New layout"><svg width="13" height="13"><path d="M6.500 0v13M0 6.500h13" stroke="#d5d8dd" stroke-width="1.600"/></svg></button>
    <svg width="6" height="14" class="ms-2"><use href="#i-slash"/></svg>
  </nav>
  <div class="ms-auto d-flex">
    <button class="tb sbtn paper">PAPER</button>
    <button class="tb sbtn" aria-label="Ortho"><svg width="15" height="14"><path d="M1.500 0v12.500H15M1.500 8.500h4v4" fill="none" stroke="#9ea5b0"/></svg></button>
    <button class="tb sbtn" aria-label="Polar tracking"><svg width="15" height="14"><circle cx="6" cy="8" r="5" fill="none" stroke="#9ea5b0"/><path d="M6 8h9M6 8l6-6" stroke="#9ea5b0"/></svg></button>
    <button class="tb sbtn nar" aria-label="Polar options"><span class="crt"></span></button>
    <button class="tb sbtn mid" aria-label="Isometric drafting"><svg width="14" height="14"><path d="M1 2l11 10" stroke="#a54f57"/><path d="M6.500 0v14" stroke="#57a878"/></svg></button>
    <button class="tb sbtn nar sgap" aria-label="Isometric options"><span class="crt"></span></button>
    <button class="tb sbtn on" aria-label="Snap tracking" aria-pressed="true"><svg width="14" height="14"><path d="M14 12.500H1L12 1" fill="none" stroke="#e8eef6"/><circle cx="6" cy="7" r="1.500" fill="#fff"/></svg></button>
    <button class="tb sbtn on border-start border-dark" aria-label="Object snap" aria-pressed="true"><svg width="15" height="15"><path d="M2.500 2.500h11v11h-11z" fill="none" stroke="#e8eef6" stroke-width="1.300"/><path d="M.5.500h4v4h-4z" fill="#5e8fc6" stroke="#fff"/></svg></button>
    <button class="tb sbtn car sgap" aria-label="Object snap options"><span class="crt"></span></button>
    <button class="tb sbtn tri" aria-label="Selection cycling"><svg width="15" height="14"><path d="M4 1.500h10v3M1.500 4v9h3" fill="none" stroke="#9ea5b0" stroke-dasharray="2 1"/><path d="M5.500 5.500h4v3h-4zM9.500 9.500h4v3h-4zM0 0h3v3H0z" fill="none" stroke="#9ea5b0"/><path d="M6 12l6-6" stroke="#9ea5b0"/></svg></button>
    <button class="tb sbtn tri" aria-label="Annotation visibility"><svg width="15" height="15"><use href="#i-person" width="13" height="15"/><circle cx="12.500" cy="3" r="2" fill="none" stroke="#9ea5b0"/></svg></button>
    <button class="tb sbtn tri sgap" aria-label="Annotation autoscale"><svg width="15" height="15"><use href="#i-person" width="13" height="15"/><path d="M11 1l2 2-1 1 3-1" stroke="#d5d9df" fill="none"/></svg></button>
    <button class="tb sbtn" aria-label="Workspace"><svg width="14" height="14"><circle cx="7" cy="7" r="4" fill="none" stroke="#dfe2e6" stroke-width="2.800"/><path d="M7 0v3M7 11v3M0 7h3M11 7h3M2 2l2 2M10 10l2 2M12 2l-2 2M4 10l-2 2" stroke="#dfe2e6" stroke-width="2"/></svg></button>
    <button class="tb sbtn nar" aria-label="Workspace options"><span class="crt"></span></button>
    <button class="tb sbtn end" aria-label="Zoom out scale"><svg width="6" height="2"><path d="M0 1h6" stroke="#dfe2e6" stroke-width="1.500"/></svg></button>
  </div>
</footer>
<script src="https://cdn.jsdelivr.net/npm/bootstrap@5.3.0/dist/js/bootstrap.bundle.min.js"></script>
</body>
</html>
